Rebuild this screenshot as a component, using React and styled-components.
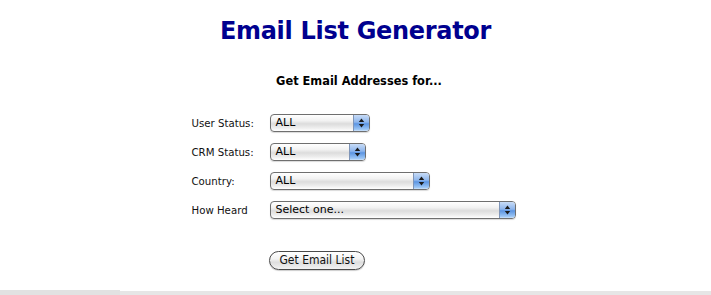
import React from 'react'
import styled, { createGlobalStyle } from 'styled-components'

const GlobalStyle = createGlobalStyle`
  html, body {
    margin: 0;
    padding: 0;
    background: #fff;
  }
  body {
    font-family: "DejaVu Sans", Verdana, sans-serif;
    color: #000;
  }
`

const Page = styled.div`
  width: 711px;
  height: 295px;
  display: flex;
  flex-direction: column;
  align-items: center;
  overflow: hidden;
`

const Title = styled.h1`
  margin: 14px 0 0;
  font-family: "DejaVu Sans", Verdana, sans-serif;
  font-size: 24px;
  line-height: 34px;
  font-weight: bold;
  color: #00008f;
  letter-spacing: -0.3px;
`

const Subtitle = styled.h2`
  margin: 26px 0 0;
  font-size: 11.4px;
  line-height: 14px;
  font-weight: bold;
  padding-left: 7px;
`

const Form = styled.form`
  margin-top: 26px;
  margin-left: -4px;
  width: 324px;
  display: grid;
  grid-template-columns: 78px 1fr;
  row-gap: 11px;
  align-items: center;
`

const Label = styled.label`
  font-family: "DejaVu Sans", "Lucida Grande", sans-serif;
  font-size: 10.2px;
  color: #111;
`

const SelectBox = styled.div`
  width: ${p => p.width}px;
  height: 18px;
  box-sizing: border-box;
  border: 1px solid #6f6f6f;
  border-radius: 4px;
  display: flex;
  overflow: hidden;
  background: linear-gradient(#ffffff 0%, #f2f2f2 35%, #dcdcdc 55%, #ededed 80%, #ffffff 100%);
  box-shadow: 0 1px 1px rgba(0, 0, 0, 0.15);
`

const SelectText = styled.span`
  flex: 1;
  padding-left: 5px;
  font-family: "DejaVu Sans", "Lucida Grande", sans-serif;
  font-size: 11px;
  line-height: 16px;
  color: #000;
  white-space: nowrap;
`

const Cap = styled.span`
  width: 15px;
  border-left: 1px solid #7f95b8;
  background: linear-gradient(#c8dcf7 0%, #8db5ec 45%, #5c95e2 55%, #9cc6f5 90%, #cfe4fb 100%);
  display: flex;
  align-items: center;
  justify-content: center;
`

const Arrows = () => (
  <svg width="7" height="10" viewBox="0 0 7 10">
    <path d="M3.5 0.5 L6.2 4 L0.8 4 Z" fill="#1a1a1a" />
    <path d="M3.5 9.5 L6.2 6 L0.8 6 Z" fill="#1a1a1a" />
  </svg>
)

const Select = ({ width, value }) => (
  <SelectBox width={width}>
    <SelectText>{value}</SelectText>
    <Cap>
      <Arrows />
    </Cap>
  </SelectBox>
)

const ButtonCell = styled.div`
  grid-column: 2;
  margin-top: 19px;
  margin-left: -1px;
`

const Button = styled.button`
  height: 19px;
  padding: 0 10px;
  border: 1px solid #4a4a4a;
  border-radius: 10px;
  background: linear-gradient(#ffffff 0%, #f4f4f4 40%, #dedede 60%, #f2f2f2 100%);
  font-family: "Liberation Sans Narrow", "DejaVu Sans Condensed", "Liberation Sans", sans-serif;
  font-size: 12px;
  line-height: 17px;
  color: #111;
  cursor: pointer;
  box-shadow: 0 1px 1px rgba(0, 0, 0, 0.2);
`

const Footer = styled.div`
  margin-top: auto;
  width: 100%;
  display: flex;
  align-items: flex-end;
  height: 6px;
`

const FooterTab = styled.div`
  width: 120px;
  height: 5px;
  background: #e2e2e2;
`

const FooterLine = styled.div`
  flex: 1;
  height: 4px;
  background: #e6e6e6;
`

const rows = [
  { label: 'User Status:', value: 'ALL', width: 100 },
  { label: 'CRM Status:', value: 'ALL', width: 96 },
  { label: 'Country:', value: 'ALL', width: 160 },
  { label: 'How Heard', value: 'Select one...', width: 246 },
]

const App = () => (
  <Page>
    <GlobalStyle />
    <Title>Email List Generator</Title>
    <Subtitle>Get Email Addresses for...</Subtitle>
    <Form onSubmit={e => e.preventDefault()}>
      {rows.map(row => (
        <React.Fragment key={row.label}>
          <Label>{row.label}</Label>
          <Select width={row.width} value={row.value} />
        </React.Fragment>
      ))}
      <ButtonCell>
        <Button type="submit">Get Email List</Button>
      </ButtonCell>
    </Form>
    <Footer>
      <FooterTab />
      <FooterLine />
    </Footer>
  </Page>
)

export default App
